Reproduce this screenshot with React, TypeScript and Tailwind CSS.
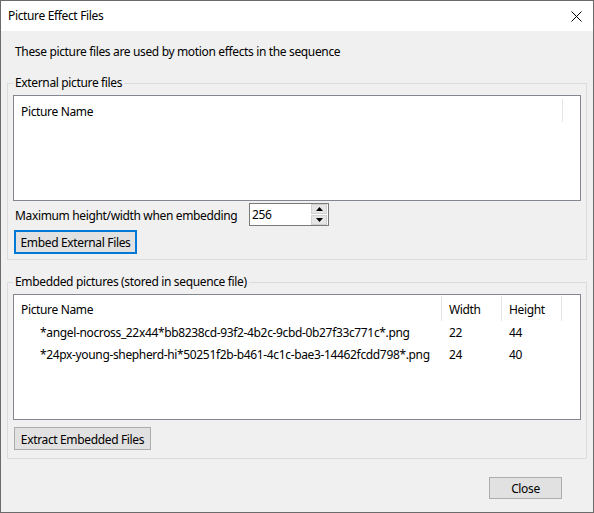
import React from 'react'

const font = "font-['Noto_Sans',sans-serif] tracking-[-0.35px]"

function Button({ label, focused, className = '' }: { label: string; focused?: boolean; className?: string }) {
  return (
    <button
      className={`flex items-center justify-center whitespace-nowrap pt-[2px] bg-[#e1e1e1] text-[12px] text-black ${
        focused ? 'border-2 border-[#0078d7]' : 'border border-[#adadad]'
      } ${className}`}
    >
      {label}
    </button>
  )
}

function Spinner() {
  return (
    <div className="flex flex-col gap-[1px] w-[16px] h-[21px]">
      <div className="flex-1 flex items-center justify-center bg-[#e5e5e5] border border-[#d0d0d0]">
        <svg width="7" height="4" viewBox="0 0 7 4">
          <path d="M3.5 0 L7 4 L0 4 Z" fill="#000" />
        </svg>
      </div>
      <div className="flex-1 flex items-center justify-center bg-[#e5e5e5] border border-[#d0d0d0]">
        <svg width="7" height="4" viewBox="0 0 7 4">
          <path d="M0 0 L7 0 L3.5 4 Z" fill="#000" />
        </svg>
      </div>
    </div>
  )
}

function HeaderCell({ label, width }: { label: string; width?: string }) {
  return (
    <div className={`flex items-center h-full border-r border-[#e5e5e5] pl-[7px] pt-[2px] ${width ?? 'flex-1'}`}>
      {label}
    </div>
  )
}

const embedded = [
  { name: '*angel-nocross_22x44*bb8238cd-93f2-4b2c-9cbd-0b27f33c771c*.png', w: 22, h: 44 },
  { name: '*24px-young-shepherd-hi*50251f2b-b461-4c1c-bae3-14462fcdd798*.png', w: 24, h: 40 },
]

export default function App() {
  return (
    <div className={`w-[594px] h-[513px] flex flex-col border border-[#6b6b6b] bg-[#f0f0f0] text-[12px] text-black whitespace-nowrap ${font}`}>
      {/* title bar */}
      <div className="h-[30px] bg-white flex items-center justify-between pl-[7px] pr-[11px]">
        <span>Picture Effect Files</span>
        <svg width="11" height="11" viewBox="0 0 11 11">
          <path d="M0.5 0.5 L10.5 10.5 M10.5 0.5 L0.5 10.5" stroke="#000" strokeWidth="1" />
        </svg>
      </div>

      <div className="flex-1 flex flex-col px-[6px]">
        <p className="mt-[13px] ml-[8px] leading-[16px]">These picture files are used by motion effects in the sequence</p>

        {/* external pictures */}
        <fieldset className="mt-[15px] border border-[#dcdcdc] px-[5px] pb-[5px] h-[185px]">
          <legend className="px-[2px] leading-[16px]">External picture files</legend>
          <div className="mt-[4px] h-[106px] bg-white border border-[#828790]">
            <div className="flex h-[26px] pt-[3px]">
              <HeaderCell label="Picture Name" />
              <div className="w-[17px]" />
            </div>
          </div>
          <div className="flex items-center mt-[2px] h-[23px]">
            <span className="ml-[2px] w-[234px] pt-[2px]">Maximum height/width when embedding</span>
            <div className="flex items-center justify-between w-[80px] h-[23px] bg-white border border-[#7a7a7a] pl-[2px] pr-[1px]">
              <span className="pt-[1px]">256</span>
              <Spinner />
            </div>
          </div>
          <Button label="Embed External Files" focused className="mt-[4px] ml-[1px] w-[123px] h-[24px]" />
        </fieldset>

        {/* embedded pictures */}
        <fieldset className="mt-[14px] border border-[#dcdcdc] px-[5px] pb-[5px] h-[185px]">
          <legend className="px-[2px] leading-[16px]">Embedded pictures (stored in sequence file)</legend>
          <div className="mt-[4px] h-[126px] bg-white border border-[#828790]">
            <div className="flex h-[26px] pt-[1px]">
              <HeaderCell label="Picture Name" />
              <HeaderCell label="Width" width="w-[60px]" />
              <HeaderCell label="Height" width="w-[60px]" />
              <div className="w-[18px]" />
            </div>
            {embedded.map((row) => (
              <div key={row.name} className="flex h-[22px] items-center pt-[2px]">
                <div className="flex-1 pl-[26px]">{row.name}</div>
                <div className="w-[60px] pl-[7px]">{row.w}</div>
                <div className="w-[60px] pl-[7px]">{row.h}</div>
                <div className="w-[18px]" />
              </div>
            ))}
          </div>
          <Button label="Extract Embedded Files" className="mt-[7px] ml-[1px] w-[137px] h-[23px]" />
        </fieldset>

        <div className="flex justify-end mt-[18px] pr-[25px]">
          <Button label="Close" className="w-[73px] h-[22px]" />
        </div>
      </div>
    </div>
  )
}
